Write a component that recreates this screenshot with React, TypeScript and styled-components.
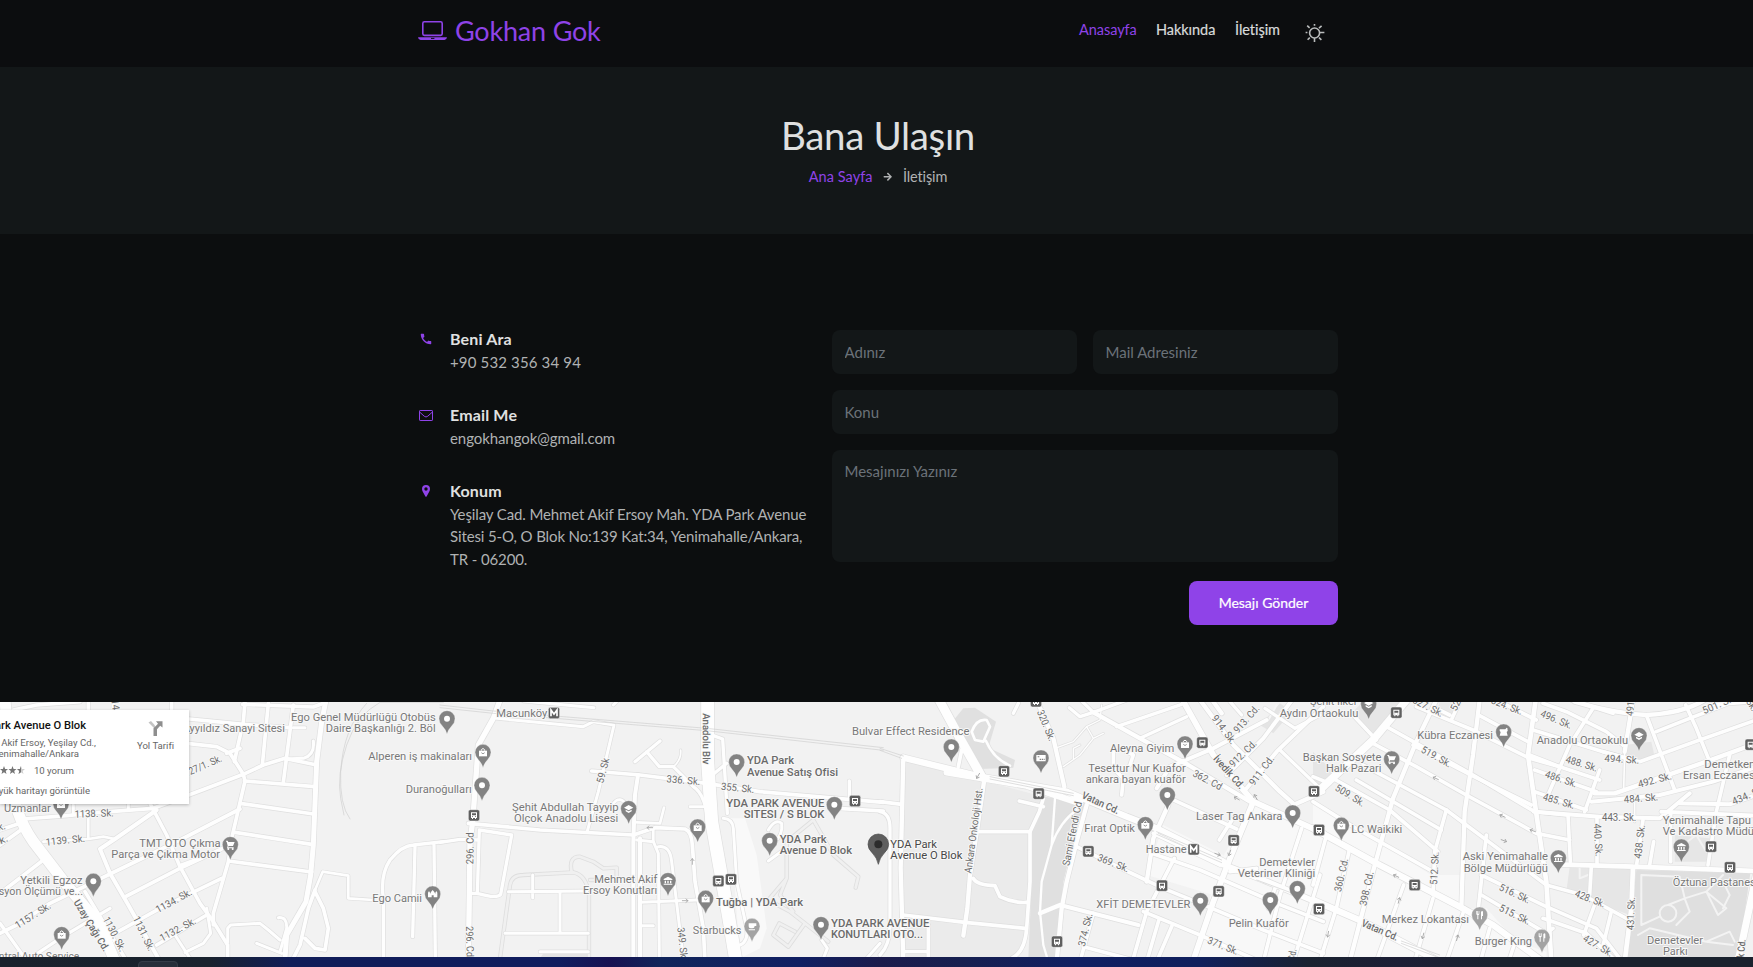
import React from "react";
import styled, { createGlobalStyle, css } from "styled-components";
import { FaArrowRight } from "react-icons/fa";
import { MdCall } from "react-icons/md";

const ACCENT = "#8f43e8";

const GlobalStyle = createGlobalStyle`
  * { box-sizing: border-box; }
  html, body { margin: 0; padding: 0; background: #0c0e0f; }
  body {
    font-family: Lato, "Liberation Sans", sans-serif;
    font-variant-ligatures: none;
    color: #b0b2b3;
    overflow: hidden;
  }
  a { color: inherit; text-decoration: none; }
`;

/* ---------- layout ---------- */

const Page = styled.div`
  display: flex;
  flex-direction: column;
  width: 100%;
  height: 967px;
  overflow: hidden;
`;

const Header = styled.header`
  display: flex;
  justify-content: space-between;
  height: 67px;
  padding: 0 428px 0 418px;
  background: #0c0d0f;
`;

const Brand = styled.a`
  display: flex;
  align-items: flex-start;
  gap: 8px;
  padding-top: 14px;
  font-size: 27px;
  line-height: 33px;
  letter-spacing: -0.2px;
  color: ${ACCENT};
`;

const LaptopSvg = styled.svg`
  width: 29px;
  height: 19px;
  margin-top: 7px;
`;

const Nav = styled.nav`
  display: flex;
  align-items: flex-start;
  padding-top: 19px;
`;

const NavLink = styled.a<{ $active?: boolean; $width: number }>`
  width: ${(p) => p.$width}px;
  font-size: 14.5px;
  line-height: 21px;
  letter-spacing: -0.05px;
  white-space: nowrap;
  color: ${(p) => (p.$active ? ACCENT : "#d8dadb")};
  -webkit-text-stroke: ${(p) => (p.$active ? 0 : 0.2)}px currentColor;
`;

const SunSvg = styled.svg`
  width: 20px;
  height: 20px;
  margin-top: 4px;
`;

const Hero = styled.section`
  display: flex;
  flex-direction: column;
  align-items: center;
  height: 167px;
  padding: 44px 0 0 3px;
  background: #131718;
`;

const Title = styled.h1`
  margin: 0;
  font-size: 38.5px;
  font-weight: 400;
  line-height: 48px;
  letter-spacing: -0.35px;
  color: #dfe0e0;
`;

const Crumbs = styled.div`
  display: flex;
  align-items: center;
  gap: 10.5px;
  margin-top: 7px;
  font-size: 14.5px;
  line-height: 22px;
`;

const CrumbLink = styled.a`
  letter-spacing: 0.05px;
  color: ${ACCENT};
`;

const CrumbHere = styled.span`
  letter-spacing: -0.15px;
`;

const Contact = styled.main`
  display: flex;
  justify-content: space-between;
  height: 468px;
  padding: 93px 415px 0 418px;
  background: #0c0e0f;
`;

const InfoList = styled.div`
  display: flex;
  flex-direction: column;
  gap: 30px;
`;

const InfoItem = styled.div`
  display: grid;
  grid-template-columns: 18px auto;
  column-gap: 14px;
`;

const InfoIcon = styled.span`
  display: flex;
  align-items: center;
  justify-content: center;
  height: 24px;
  padding-right: 2px;
  color: ${ACCENT};
`;

const InfoTitle = styled.h2`
  margin: 0;
  font-size: 16px;
  font-weight: 700;
  line-height: 23.5px;
  letter-spacing: 0.15px;
  color: #e0e1e1;
`;

const InfoText = styled.p<{ $spacing: number }>`
  margin: 0;
  font-size: 15px;
  line-height: 22.5px;
  letter-spacing: ${(p) => p.$spacing}px;
  white-space: nowrap;
`;

const Form = styled.form`
  display: grid;
  grid-template-columns: 245px 245px;
  grid-template-rows: 44px 44px 112px 44px;
  gap: 16px;
  margin-top: 3px;
`;

const fieldStyle = css`
  width: 100%;
  height: 100%;
  padding: 0 12.5px 1px;
  border: 0;
  border-radius: 8px;
  background: #131718;
  color: #dcdddd;
  font: 15px/22px Lato, "Liberation Sans", sans-serif;
  resize: none;
  outline: none;
  &::placeholder { color: #6b7279; opacity: 1; }
`;

const Field = styled.input<{ $wide?: boolean }>`
  ${fieldStyle}
  ${(p) => p.$wide && "grid-column: 1 / -1;"}
`;

const MessageField = styled.textarea`
  ${fieldStyle}
  grid-column: 1 / -1;
  padding-top: 10px;
`;

const SubmitButton = styled.button`
  grid-column: 1 / -1;
  justify-self: end;
  width: 149px;
  height: 44px;
  margin-top: 3px;
  padding: 0 0 2px;
  border: 0;
  border-radius: 8px;
  background: ${ACCENT};
  color: #fff;
  font: 14px Lato, "Liberation Sans", sans-serif;
  -webkit-text-stroke: 0.2px currentColor;
`;

const MapFrame = styled.section`
  position: relative;
  height: 255px;
  overflow: hidden;
  background: #f2f2f2;
`;

const MapSvg = styled.svg`
  display: block;
  width: 1753px;
  height: 255px;
  font-family: Roboto, sans-serif;
`;

const PlaceCard = styled.div`
  position: absolute;
  left: 0;
  top: 8px;
  display: flex;
  justify-content: space-between;
  width: 189px;
  height: 94px;
  overflow: hidden;
  background: #fff;
  box-shadow: 0 1px 3px rgba(0, 0, 0, 0.25);
  font-family: Roboto, sans-serif;
`;

const PlaceInfo = styled.div`
  padding-top: 8px;
`;

const PlaceLine = styled.div<{ $right: number; $title?: boolean; $gap?: number }>`
  display: flex;
  justify-content: flex-end;
  align-items: center;
  width: ${(p) => p.$right}px;
  margin-top: ${(p) => p.$gap ?? 0}px;
  font-size: ${(p) => (p.$title ? 11.2 : 9.6)}px;
  font-weight: ${(p) => (p.$title ? 500 : 400)};
  line-height: ${(p) => (p.$title ? 15 : 11)}px;
  white-space: nowrap;
  color: ${(p) => (p.$title ? "#111" : "#666")};
`;

const StarsSvg = styled.svg`
  width: 42px;
  height: 9px;
  margin-right: 9px;
  flex: none;
`;

const Directions = styled.a`
  display: flex;
  flex-direction: column;
  align-items: center;
  width: 67px;
  padding-top: 10px;
  font-size: 9.6px;
  line-height: 12px;
  color: #666;
`;

const DirectionsSvg = styled.svg`
  width: 15px;
  height: 16px;
  margin-bottom: 4px;
`;

const Taskbar = styled.footer`
  flex: none;
  display: flex;
  height: 10px;
  padding: 4px 0 0 138px;
  background: linear-gradient(90deg, #18212c 0, #19222e 210px, #101d58 290px, #101d5e 560px,
    #171252 610px, #11255a 660px, #101f62 800px, #1b1c4c 880px, #172050 960px, #101f62 1080px,
    #10205c 1200px, #1a2230 1310px, #1c1f36 1400px, #1a222e 1500px, #1a222e 100%);
`;

const TaskButton = styled.span`
  width: 40px;
  height: 10px;
  border: 1px solid #343c48;
  border-radius: 4px;
  background: #262e3a;
`;

/* ---------- map data: the area is split in four sheets drawn at three units per pixel ---------- */

type Sheet = 0 | 1 | 2 | 3;
const ORIGIN = [0, 440, 880, 1313];
const S = 3;
const TOP = 7;
const px = (s: Sheet, x: number) => ORIGIN[s] + x / S;
const py = (y: number) => y / S - TOP;

const AREAS: [Sheet, string, string][] = [
  [2, "#ebebeb", "M70 190L300 255L490 305L450 410L450 560L435 740L400 790H70Z"],
  [2, "#e0e0e0", "M205 95L250 40L285 38L348 80L325 158L405 195L400 218L300 222Z"],
  [2, "#e0e0e0", "M495 305L615 325L580 440L550 560L530 790H445L455 560V415Z"],
  [2, "#e4e4e4", "M1140 90L1200 25L1235 50L1180 115Z"],
  [2, "#f8f8f8", "M1010 520L1120 320L1320 410V790H950Z"],
  [2, "#f8f8f8", "M850 390L1030 480L1000 600L800 540Z"],
  [1, "#f9f9f9", "M870 370L915 370L950 480L980 700L960 760L900 790Z"],
  [3, "#f8f8f8", "M0 320L180 430L355 540L440 540L440 640L520 640L610 740L700 770L700 790H0Z"],
  [3, "#e6e6e6", "M110 60L150 20L270 20L180 125Z"],
  [3, "#e6e6e6", "M0 170L70 240L20 280L0 270Z"],
  [3, "#e6e6e6", "M935 150L1015 140L1025 185L940 205Z"],
  [3, "#e6e6e6", "M770 515L955 520L950 660L895 640L840 610L760 590Z"],
  [3, "#dfdfdf", "M970 525L1312 535L1275 790H940Z"],
  [3, "#e6e6e6", "M1085 420L1190 430V500L1085 500Z"],
  [3, "#e8e8e8", "M380 22L430 22L410 70L370 50Z"],
  [1, "#e4e4e4", "M310 775H445V790H300Z"],
];

const ROADS: [Sheet, number, string][] = [
  [0, 12, "M40 45L110 30L240 20M515 20V45M340 20V45M265 20V45M0 60L40 50"],
  [0, 12, "M70 372L200 362L300 352L460 340L620 280L730 238L790 210L855 190L950 210"],
  [0, 10, "M855 192L910 190Q945 180 940 138M880 98H915M385 320V345M220 330V355"],
  [0, 12, "M0 405L60 385M0 450L70 400M0 595L130 495"],
  [0, 9, "M265 370V430M130 440L265 432L310 425L345 432"],
  [0, 13, "M470 345L345 432L300 462L330 535L385 630L475 790"],
  [0, 12, "M255 590L375 790M0 715L50 690L150 625L330 537L540 435L720 342"],
  [0, 12, "M380 603L540 520L690 450M350 712L480 640L665 550M470 750L620 660M545 510L600 490"],
  [0, 12, "M450 325L500 420L540 515L600 625L640 680L683 750V790"],
  [0, 10, "M620 640L632 715L610 745L555 772M525 720L570 790"],
  [0, 12, "M735 20L730 80L703 200M805 25L787 210M880 30L850 262"],
  [0, 12, "M568 72L730 88L870 98M560 145L650 155L690 175L730 238L735 258M720 160L680 175"],
  [0, 12, "M735 258L695 430L685 500L640 655V690M733 258L945 275M720 325L940 357M705 412L935 448M685 498L935 531M728 28L940 36L978 22"],
  [0, 12, "M945 585L925 640L900 750L880 790M945 590L970 640L985 700L975 765L945 760L915 730"],
  [0, 16, "M978 15L965 80L950 200L940 450L932 540L918 620L860 720L855 790"],
  [0, 9, "M945 585L968 530L1045 542V610L1120 615"],
  [0, 10, "M683 740V700L692 690L780 685L805 705L840 735M835 668Q862 665 860 700L840 770M770 745L845 775"],
  [0, 11, "M1150 790V610Q1140 540 1170 495Q1205 452 1240 450L1330 440M1245 455L1238 725M1302 450L1306 790"],
  [0, 11, "M90 790L180 730L330 640M0 685L75 790"],
  [0, 34, "M15 15L35 250Q38 350 100 440L200 570L300 690L345 800"],

  [1, 10, "M250 18L462 38M170 70L430 95L460 80L522 90L475 290L442 408M520 30L530 20"],
  [1, 9, "M590 382L660 385L672 338M520 325Q540 300 560 330M750 335H800M640 400V438"],
  [1, 11, "M118 405L215 420L182 598Q170 612 112 595L118 405M88 595H115M0 442L60 433L115 435"],
  [1, 10, "M205 590L440 588M278 540V608M360 590V710M195 715H445M300 770H445"],
  [1, 10, "M590 435L640 440L655 475L658 790M655 455Q690 450 695 500L730 790M600 622L770 615M600 692H640"],
  [1, 11, "M585 200L660 138M620 170L658 215H700L760 275Q800 300 805 400"],
  [1, 6, "M700 215Q725 195 722 165"],
  [1, 11, "M820 122L848 132L862 355M805 250L860 205M1228 258V305"],
  [1, 12, "M455 228L600 240L800 265L960 290L1330 322M1190 340L1330 348"],
  [1, 13, "M594 240L585 300L580 440V800M600 430V800"],
  [1, 12, "M85 385L300 405L580 420L645 398L735 402Q755 410 757 450L765 560L790 700L795 800"],
  [1, 17, "M180 15L160 70L115 150L98 380L90 440L88 600L85 800"],
  [1, 10, "M850 370Q878 372 880 400L890 560L920 700Q925 740 900 750"],
  [1, 40, "M803 10L803 200L815 380L840 520L865 660L888 800"],
  [1, 10, "M985 498L1030 465M985 405Q1005 370 1025 385Q1030 420 1000 445"],
  [1, 10, "M1150 790L1162 760L1145 735M1280 790L1320 745"],

  [2, 12, "M70 660L255 682L435 700M145 690V790M0 320L65 328M300 410H450M418 318L490 335"],
  [2, 11, "M0 350Q30 355 30 400V690Q30 750 0 780M70 770H145"],
  [2, 12, "M490 310L478 350L450 410V560L440 700Q435 770 395 790M280 550Q290 570 345 572L360 605Q400 625 440 622"],
  [2, 14, "M70 185L62 520L70 800M312 260L292 400L270 540L262 640L250 722"],
  [2, 9, "M275 110Q290 70 320 75L330 95L310 140L285 135ZM318 138Q340 190 390 212"],
  [2, 8, "M525 310L515 450L485 560L480 650L490 750L505 800M515 450Q540 380 590 345"],
  [2, 14, "M470 15L520 130L553 275M620 330L590 440L560 560L545 640L530 800M480 655L540 630L775 690"],
  [2, 12, "M590 455L740 528L850 580L960 625L1150 705L1330 775M640 655L600 800M610 755L760 795"],
  [2, 11, "M568 38L600 65L640 52L605 18M640 52L740 15M710 95L905 28M780 130L920 65M400 55L415 25"],
  [2, 5, "M525 160L580 140L620 95L660 75L665 30M550 215L600 180L640 130L670 115M620 95L640 130M580 190V160L600 150"],
  [2, 14, "M640 52L780 130L925 210L1110 320"],
  [2, 12, "M700 170V220L730 250L725 300M730 165L760 180L750 210"],
  [2, 14, "M960 15L1060 150L1200 290L1245 330M1240 330L1330 290M1000 20L1025 55"],
  [2, 13, "M1160 75L1000 160L870 215L830 280M1240 10L1150 130L1040 240M1330 35L1190 170L1100 280"],
  [2, 11, "M1200 165L1330 290M1155 40L1245 100L1320 60M1050 20L1085 60"],
  [2, 12, "M870 310L1070 402M1060 370L1040 400L1018 435M820 415L1020 510M883 490L800 650L757 800M815 475L960 525L1190 625L1330 680"],
  [2, 12, "M790 650L960 720L1140 800M838 670L800 800M877 690L830 800"],
  [2, 12, "M1265 400L1200 600L1150 800M1320 540L1240 800M1185 580L1165 640M1130 520L1050 530"],
  [2, 14, "M865 330L820 430L800 560"],
  [2, 18, "M905 10L1000 180L1120 320L1330 415M1120 320L1050 490L1000 620L935 810"],
  [2, 12, "M235 215L245 165"],
  [2, 28, "M175 10L240 130L305 245"],
  [2, 20, "M70 188L300 245L560 290L740 365L830 400L1030 500M200 232L440 272L600 325"],
  [2, 18, "M1020 505L1150 555L1330 630"],

  [3, 12, "M180 145L310 215L460 300L670 415L770 435M215 92L480 240L665 350L760 360"],
  [3, 12, "M310 35L480 105L650 190L740 215M500 62L645 140M300 150L470 238L655 330M130 255L385 405"],
  [3, 12, "M150 210L400 345L700 570L810 600L940 670M60 250L230 345L375 470M0 245L50 265M0 320L120 395L360 530"],
  [3, 12, "M505 540L700 635L850 700L920 790M505 600L700 715L720 700M400 345L365 470L360 600M520 420L495 650"],
  [3, 12, "M115 55L190 135M440 20L415 75M550 15L670 75M410 60L370 40"],
  [3, 12, "M660 105L870 170L960 195M650 180L740 215L860 255M665 225L850 290M665 290L820 345"],
  [3, 12, "M690 25L760 50L880 110L930 150M840 40L770 150L705 300M860 225L815 350M775 15L900 55"],
  [3, 14, "M785 20Q900 55 1000 60Q1110 55 1175 15M960 15L935 170M845 295L905 295L1050 245L1180 200L1330 145"],
  [3, 6, "M935 170L932 285M965 300V380"],
  [3, 12, "M1000 60L1085 285M1118 30L1150 100L1190 200M1030 110L1130 70L1260 20M870 170L980 200L1160 135L1330 75M1190 30L1320 20"],
  [3, 13, "M835 320L1040 300L1200 260L1330 215M662 350L860 365L1040 370L1130 295M1100 325L1250 328L1330 300M1045 350L1330 362"],
  [3, 12, "M1250 180L1210 350L1185 510M765 360L772 500M852 370V510M990 375L970 515M1022 440L1010 510M1073 350V500"],
  [3, 12, "M835 515L830 600M850 615L812 720M895 650L868 760M690 670L820 715L900 790"],
  [3, 15, "M730 508L960 515L1330 528M960 515L955 640L935 800"],
  [3, 14, "M370 15L310 140L240 310L180 530L110 800M500 15L480 180L455 350L445 640"],
  [3, 15, "M668 15L645 180L672 370L700 560L715 800"],
  [3, 12, "M38 430L0 570M110 460L70 640L20 800M272 570L190 800M360 610L305 800M455 640L400 800M530 700L505 790M610 730L590 790"],
  [3, 24, "M285 10L180 135L15 290"],
  [3, 20, "M0 400L200 510L440 635L540 690L690 800M0 615L150 680L380 800"],
  [3, 22, "M1330 540L1275 800"],
];

/* service roads and park paths, drawn in one pale tone */
const PATHS: [Sheet, string, string][] = [
  [1, "#dedede", "M180 790L210 570Q215 540 250 540L400 532Q440 540 447 600V790M395 530Q385 485 420 485L460 500L490 520L530 518V555H450"],
  [1, "#dedede", "M1040 440L1120 375L1180 480L1255 545L1247 578M1040 440V550L985 615L1050 650L1165 740M1095 685L1045 755L1000 720L1018 685L1065 710M1040 550L1020 600L1060 650"],
  [3, "#f3f3f3", "M985 690V540L1100 545L1115 610L1065 630M1115 610L1180 590L1240 640L1215 660L1180 590M1180 590L1230 540M1040 655A25 25 0 1 0 1090 655A25 25 0 1 0 1040 655M985 690L1040 665M975 720L1010 700L1180 740L1260 750M1090 690L1130 650L1115 610M1180 740L1250 710L1265 740"],
  [3, "#f3f3f3", "M800 520L800 550L825 540M1110 450L1150 420L1180 470M1230 560L1250 600L1230 640"],
  [2, "#f6f6f6", "M1165 75L1190 30M1180 90L1205 45"],
];

const RAILS: [Sheet, string][] = [
  [0, "M1330 22L1140 22Q1070 60 1040 150Q1010 240 1022 310L1032 360M1100 25Q1030 100 1022 230Q1018 330 1050 372"],
  [1, "M0 30L160 48L800 100L1330 158M0 38L160 55L800 107L1330 166"],
  [2, "M0 160L70 183M0 166L65 190M330 245L580 295M330 252L580 302M830 410L1025 495M830 418L1025 503M1130 555L1230 592"],
  [3, "M265 745L370 785M265 738L380 780"],
];

type Label = [Sheet, string, number, number, number, number, ("road" | "bold" | "main")?];

const LABELS: Label[] = [
  [0, "Ayyıldız Sanayi Sitesi", 548, 111, 855, 111],
  [0, "Ego Genel Müdürlüğü Otobüs", 873, 78, 1307, 78],
  [0, "Daire Başkanlığı 2. Böl", 977, 111, 1307, 111],
  [0, "Alperen iş makinaları", 1105, 196, 1416, 196],
  [0, "Duranoğulları", 1217, 294, 1415, 294],
  [0, "Uzmanlar", 12, 352, 152, 352],
  [0, "TMT OTO Çıkma", 418, 455, 662, 455],
  [0, "Parça ve Çıkma Motor", 334, 488, 660, 488],
  [0, "Yetkili Egzoz", 61, 566, 248, 566],
  [0, "Emisyon Ölçümü ve...", -58, 599, 249, 599],
  [0, "Ego Camii", 1117, 620, 1266, 620],
  [0, "Central Auto Service", -40, 796, 238, 796],
  [0, "127/1. Sk.", 558, 246, 668, 198, "road"],
  [0, "1138. Sk.", 224, 368, 341, 364, "road"],
  [0, "1139. Sk.", 138, 452, 256, 440, "road"],
  [0, "Sk.", -22, 410, 18, 402, "road"],
  [0, "Sk.", -16, 455, 26, 438, "road"],
  [0, "1157. Sk.", 53, 702, 155, 638, "road"],
  [0, "1134. Sk.", 474, 655, 578, 598, "road"],
  [0, "1132. Sk.", 486, 740, 590, 684, "road"],
  [0, "1130. Sk.", 308, 672, 360, 772, "road"],
  [0, "1131. Sk.", 398, 670, 446, 770, "road"],
  [0, "Uzay Çağı Cd.", 220, 622, 312, 772, "bold"],
  [0, "14", 334, 14, 338, 46, "road"],
  [1, "Macunköy", 169, 66, 322, 66],
  [1, "Anadolu Blv", 788, 55, 788.2, 208, "bold"],
  [1, "59. Sk", 490, 266, 508, 192, "road"],
  [1, "336. Sk.", 679, 262, 780, 270, "road"],
  [1, "355. Sk.", 842, 284, 942, 294, "road"],
  [1, "296. Cd", 100, 508, 101, 412, "road"],
  [1, "296. Cd", 78, 694, 80, 786, "road"],
  [1, "349. Sk.", 712, 698, 722, 796, "road"],
  [1, "YDA Park", 921, 208, 1062, 208, "bold"],
  [1, "Avenue Satış Ofisi", 921, 242, 1194, 242, "bold"],
  [1, "Şehit Abdullah Tayyip", 216, 347, 536, 347],
  [1, "Olçok Anadolu Lisesi", 222, 381, 535, 381],
  [1, "YDA PARK AVENUE", 859, 335, 1153, 335, "bold"],
  [1, "SITESI / S BLOK", 911, 369, 1153, 369, "bold"],
  [1, "YDA Park", 1019, 443, 1160, 443, "bold"],
  [1, "Avenue D Blok", 1019, 477, 1236, 477, "bold"],
  [1, "Mehmet Akif", 463, 563, 652, 563],
  [1, "Ersoy Konutları", 429, 597, 652, 597],
  [1, "Tuğba | YDA Park", 828, 633, 1089, 633, "bold"],
  [1, "Starbucks", 758, 717, 904, 717],
  [1, "YDA PARK AVENUE", 1173, 696, 1468, 696, "bold"],
  [1, "KONUTLARI OTO...", 1173, 729, 1449, 729, "bold"],
  [1, "Bulvar Effect Residence", 1236, 121, 1588, 121],
  [2, "YDA Park", 31, 458, 171, 458, "main"],
  [2, "Avenue O Blok", 31, 492, 247, 492, "main"],
  [2, "320. Sk.", 470, 50, 508, 140, "road"],
  [2, "Aleyna Giyim", 690, 170, 883, 170],
  [2, "Tesettur Nur Kuafor", 625, 231, 917, 231],
  [2, "ankara bayan kuaför", 617, 265, 917, 265],
  [2, "Laser Tag Ankara", 948, 376, 1207, 376],
  [2, "Fırat Optik", 613, 412, 765, 412],
  [2, "Hastane", 797, 474, 920, 474],
  [2, "Demetevler", 1138, 512, 1305, 512],
  [2, "Veteriner Kliniği", 1073, 546, 1306, 546],
  [2, "XFİT DEMETEVLER", 649, 640, 931, 640],
  [2, "Pelin Kuaför", 1046, 695, 1226, 695],
  [2, "Aydın Ortaokulu", 1199, 65, 1435, 65],
  [2, "Şehit İlker", 1290, 31, 1432, 31],
  [2, "Başkan Sosyete", 1268, 198, 1504, 198],
  [2, "Ankara Onkoloji Hst.", 274, 536, 308, 280, "road"],
  [2, "Sami Efendi Cd", 568, 514, 606, 322, "road"],
  [2, "Vatan Cd.", 603, 308, 712, 358, "bold"],
  [2, "İvedik Cd.", 998, 192, 1080, 284, "bold"],
  [2, "362. Cd", 936, 242, 1020, 286, "road"],
  [2, "369. Sk.", 650, 496, 742, 532, "road"],
  [2, "371. Sk.", 980, 744, 1070, 780, "road"],
  [2, "374. Sk.", 614, 756, 638, 658, "road"],
  [2, "914. Sk.", 994, 70, 1054, 150, "road"],
  [2, "913. Cd.", 1074, 116, 1140, 42, "road"],
  [2, "912. Cd.", 1060, 218, 1132, 148, "road"],
  [2, "911. Cd.", 1122, 274, 1184, 192, "road"],
  [2, "398. Cd.", 1236, 850, 1250, 764, "road"],
  [3, "Halk Pazari", 39, 231, 205, 231],
  [3, "Kübra Eczanesi", 313, 133, 540, 133],
  [3, "Anadolu Ortaokulu", 671, 146, 945, 146],
  [3, "Demetkent", 1174, 219, 1338, 219],
  [3, "Ersan Eczanesi", 1110, 253, 1333, 253],
  [3, "Yenimahalle Tapu", 1049, 388, 1314, 388],
  [3, "Ve Kadastro Müdürlüğü", 1049, 421, 1398, 421],
  [3, "Öztuna Pastanesi", 1079, 573, 1336, 573],
  [3, "Demetevler", 1002, 748, 1170, 748],
  [3, "Parkı", 1050, 781, 1124, 781],
  [3, "LC Waikiki", 115, 414, 268, 414],
  [3, "Aski Yenimahalle", 449, 496, 705, 496],
  [3, "Bölge Müdürlüğü", 452, 530, 705, 530],
  [3, "Merkez Lokantası", 206, 683, 468, 683],
  [3, "Burger King", 485, 751, 657, 751],
  [3, "527. Sk.", 296, 22, 384, 66, "road"],
  [3, "524. Sk.", 532, 24, 624, 60, "road"],
  [3, "52", 430, 50, 444, 20, "road"],
  [3, "519. Sk.", 322, 170, 408, 218, "road"],
  [3, "509. Sk.", 64, 284, 148, 336, "road"],
  [3, "496. Sk.", 680, 64, 772, 102, "road"],
  [3, "488. Sk.", 756, 202, 850, 230, "road"],
  [3, "486. Sk.", 694, 246, 788, 278, "road"],
  [3, "485. Sk.", 688, 314, 782, 342, "road"],
  [3, "494. Sk.", 874, 200, 978, 206, "road"],
  [3, "492. Sk.", 978, 278, 1078, 252, "road"],
  [3, "484. Sk.", 933, 324, 1036, 316, "road"],
  [3, "443. Sk.", 867, 378, 970, 378, "road"],
  [3, "491", 960, 64, 964, 20, "road"],
  [3, "501. Sk.", 1174, 58, 1270, 16, "road"],
  [3, "Sk.", 1298, 20, 1318, 50, "road"],
  [3, "434. Sk.", 1262, 330, 1358, 290, "road"],
  [3, "440. Sk.", 842, 386, 848, 484, "road"],
  [3, "438. Sk.", 984, 492, 996, 390, "road"],
  [3, "512. Sk.", 372, 570, 378, 470, "road"],
  [3, "360. Cd.", 84, 592, 106, 492, "road"],
  [3, "398. Cd.", 160, 634, 182, 532, "road"],
  [3, "516. Sk.", 556, 584, 646, 626, "road"],
  [3, "515. Sk.", 556, 646, 646, 690, "road"],
  [3, "428. Sk.", 784, 604, 872, 638, "road"],
  [3, "427. Sk.", 808, 736, 892, 786, "road"],
  [3, "431. Sk.", 962, 706, 966, 606, "road"],
  [3, "Vatan Cd.", 143, 692, 250, 738, "bold"],
  [3, "İvedik Cd.", 1288, 842, 1298, 734, "bold"],
];

type Glyph = "dot" | "bag" | "cart" | "school" | "bank" | "cup" | "food" | "mosque" | "jar" | "ticket";

const PINS: [Sheet, number, number, Glyph, string?][] = [
  [0, 183, 327, "bag"], [0, 691, 449, "cart"], [0, 280, 559, "dot"], [0, 185, 719, "bag"], [0, 1298, 597, "mosque"],
  [1, 21, 71, "dot"], [1, 129, 172, "bag"], [1, 126, 271, "dot"], [1, 566, 341, "school"], [1, 890, 201, "dot"],
  [1, 1183, 329, "dot"], [1, 989, 437, "dot"], [1, 773, 396, "bag"], [1, 684, 557, "bank"], [1, 797, 610, "bag"],
  [1, 936, 694, "cup", "#a3a3a3"], [1, 1143, 689, "dot"],
  [2, 214, 156, "dot"], [2, 483, 189, "ticket"], [2, 915, 147, "bag"], [2, 862, 300, "dot"], [2, 1238, 354, "dot"],
  [2, 796, 389, "bag"], [2, 1252, 581, "dot"], [2, 961, 617, "dot"], [2, 1171, 615, "dot"],
  [3, 167, 27, "school"], [3, 236, 192, "cart"], [3, 572, 111, "jar"], [3, 978, 122, "school"], [3, 85, 391, "bag"],
  [3, 736, 489, "bank"], [3, 1105, 456, "bank"], [3, 500, 660, "food", "#a3a3a3"], [3, 687, 727, "food", "#a3a3a3"],
];

const STOPS: [Sheet, number, number, "bus" | "metro"][] = [
  [1, 342, 54, "metro"], [1, 102, 361, "bus"], [1, 1245, 318, "bus"], [1, 835, 558, "bus"], [1, 873, 553, "bus"],
  [2, 468, 19, "bus"], [2, 372, 229, "bus"], [2, 476, 296, "bus"], [2, 967, 143, "bus"], [2, 1302, 289, "bus"],
  [2, 1061, 436, "bus"], [2, 941, 463, "metro"], [2, 625, 469, "bus"], [2, 846, 572, "bus"], [2, 1016, 589, "bus"],
  [2, 531, 740, "bus"], [2, 1317, 405, "bus"], [2, 1317, 642, "bus"],
  [3, 250, 53, "bus"], [3, 305, 570, "bus"], [3, 1194, 455, "bus"], [3, 1251, 517, "bus"], [3, 1313, 149, "bus"],
];

const ARROWS: [Sheet, number, number, number][] = [
  [1, 629, 398, 180], [1, 757, 499, -90], [1, 736, 617, 0], [2, 1070, 310, 210], [2, 1127, 306, -120], [2, 1013, 478, 20],
  [2, 1049, 474, 110], [2, 294, 243, 120], [3, 368, 250, 205], [3, 568, 363, 205], [3, 659, 407, 200], [3, 573, 437, 20],
  [3, 249, 543, 205], [3, 258, 616, -75], [3, 330, 723, 105], [3, 433, 728, -75], [3, 45, 718, 100],
];

/* ---------- map pieces ---------- */

const LABEL_STYLE = {
  poi: { size: 11.4, fill: "#787878", weight: 400 },
  road: { size: 10.2, fill: "#6c6c6c", weight: 400 },
  bold: { size: 11.2, fill: "#6a6a6a", weight: 500 },
  main: { size: 11.4, fill: "#484848", weight: 400 },
};

function MapLabel({ label }: { label: Label }) {
  const [s, text, x1, y1, x2, y2, kind] = label;
  const st = LABEL_STYLE[kind ?? "poi"];
  const tilted = y1 !== y2;
  const size = kind === "bold" && tilted ? 10.2 : st.size;
  const length = Math.hypot(x2 - x1, y2 - y1) / S;
  const angle = (Math.atan2(y2 - y1, x2 - x1) * 180) / Math.PI;
  return (
    <text
      transform={`translate(${px(s, x1)} ${py(y1)}) rotate(${angle})`}
      fontSize={size}
      fontWeight={st.weight}
      fill={st.fill}
      stroke="#f8f8f8"
      strokeWidth={2}
      strokeLinejoin="round"
      paintOrder="stroke"
      textLength={length}
      lengthAdjust="spacingAndGlyphs"
    >
      {text}
    </text>
  );
}

function PinGlyph({ kind }: { kind: Glyph }) {
  switch (kind) {
    case "dot":
      return <circle r={9} fill="#fff" />;
    case "bag":
      return (
        <g>
          <path d="M-12 -5H12V12H-12Z" fill="#fff" />
          <path d="M-5 -5V-8Q0 -15 5 -8V-5" fill="none" stroke="#fff" strokeWidth={3} />
          <path d="M-5 1Q0 8 5 1" fill="none" stroke="#838383" strokeWidth={2.5} />
        </g>
      );
    case "cart":
      return (
        <g fill="#fff">
          <path d="M-13 -12H-8L-6 -8H13L8 4H-5L-7 8H10V11H-10L-8 3L-11 -9H-13Z" />
          <circle cx={-6} cy={13} r={3} />
          <circle cx={7} cy={13} r={3} />
        </g>
      );
    case "school":
      return <path d="M-14 -3L0 -11L14 -3L0 5ZM-9 3L0 8L9 3V8L0 13L-9 8Z" fill="#fff" />;
    case "bank":
      return <path d="M-13 -5L0 -12L13 -5V-2H-13ZM-10 0H-6V8H-10ZM-2 0H2V8H-2ZM6 0H10V8H6ZM-13 9H13V12H-13Z" fill="#fff" />;
    case "cup":
      return <path d="M-10 -9H13V-1H8Q8 6 1 6H-4Q-10 6 -10 0ZM-10 9H9V12H-10Z" fill="#fff" />;
    case "food":
      return <path d="M-10 -12V-3Q-10 0 -7 0V13H-4V0Q-1 0 -1 -3V-12H-3V-4H-5V-12H-7V-4H-8V-12ZM4 13V-10Q9 -14 10 -10V3H7V13Z" fill="#fff" />;
    case "mosque":
      return <path d="M-14 10V-4L-11 -9L-8 -4V0Q-6 -6 0 -12Q6 -6 8 0V-4L11 -9L14 -4V10H3V4H-3V10Z" fill="#fff" />;
    case "jar":
      return <path d="M-12 -8H5L9 -13L12 -11L10 -8H12V-3L9 0L12 11H-12L-9 0L-12 -3Z" fill="#fff" />;
    case "ticket":
      return <path d="M-14 -9H14V10H-14ZM-10 -5V-2H-5V-5ZM-4 2V6H0V2ZM2 2V6H6V2ZM8 2V6H11V2Z" fill="#fff" fillRule="evenodd" />;
  }
}

function StreetMap() {
  const sheet = (s: Sheet) => `translate(${ORIGIN[s]} ${-TOP}) scale(${1 / S})`;
  return (
    <MapSvg viewBox="0 0 1753 255">
      {AREAS.map(([s, fill, d], i) => (
        <path key={i} d={d} fill={fill} transform={sheet(s)} />
      ))}
      <g fill="none" strokeLinecap="round" strokeLinejoin="round">
        {PATHS.map(([s, stroke, d], i) => (
          <path key={i} d={d} stroke={stroke} strokeWidth={s === 1 ? 13 : 6} transform={sheet(s)} />
        ))}
        {PATHS.filter(([s]) => s === 1).map(([s, , d], i) => (
          <path key={i} d={d} stroke="#f0f0f0" strokeWidth={8} transform={sheet(s)} />
        ))}
        {ROADS.map(([s, w, d], i) => (
          <path key={i} d={d} stroke="#dfdfdf" strokeWidth={w + 3} transform={sheet(s)} />
        ))}
        {ROADS.map(([s, w, d], i) => (
          <path key={i} d={d} stroke="#fefefe" strokeWidth={w - 1} transform={sheet(s)} />
        ))}
        {RAILS.map(([s, d], i) => (
          <path key={i} d={d} stroke="#cfcfcf" strokeWidth={2} transform={sheet(s)} />
        ))}
        {ARROWS.map(([s, x, y, a], i) => (
          <path
            key={i}
            d="M-9 0H8M2 -5L8 0L2 5"
            stroke="#a5a5a5"
            strokeWidth={2.5}
            transform={`${sheet(s)} translate(${x} ${y}) rotate(${a})`}
          />
        ))}
      </g>
      {LABELS.map((l, i) => (
        <MapLabel key={i} label={l} />
      ))}
      {STOPS.map(([s, x, y, kind], i) => (
        <g key={i} transform={`${sheet(s)} translate(${x} ${y})`}>
          <rect x={-17} y={-17} width={34} height={34} rx={6} fill="#5f5f5f" stroke="#fafafa" strokeWidth={1.5} />
          {kind === "bus" ? (
            <path
              d="M-9 -9H9V8H6V11H3V8H-3V11H-6V8H-9ZM-6 -6V0H6V-6ZM-6 3V5H-3V3ZM3 3V5H6V3Z"
              fill="#fff"
              fillRule="evenodd"
            />
          ) : (
            <path d="M-9 10V-9L0 3L9 -9V10" fill="none" stroke="#fff" strokeWidth={5} />
          )}
        </g>
      ))}
      {PINS.map(([s, x, y, kind, fill], i) => (
        <g key={i} transform={`${sheet(s)} translate(${x} ${y})`}>
          <path
            d="M0 46Q-4 32 -14 22Q-24 12 -24 0A24 24 0 1 1 24 0Q24 12 14 22Q4 32 0 46Z"
            fill={fill ?? "#838383"}
            stroke="#fafafa"
            strokeWidth={1}
          />
          <PinGlyph kind={kind} />
        </g>
      ))}
      <g transform={`${sheet(1)} translate(1315 448)`}>
        <path d="M0 60Q-4 40 -18 26Q-31 14 -31 0A31 31 0 1 1 31 0Q31 14 18 26Q4 40 0 60Z" fill="#5e5e5e" stroke="#4a4a4a" strokeWidth={2} />
        <circle r={12} fill="#2c2c2c" />
      </g>
    </MapSvg>
  );
}

/* ---------- icons ---------- */

const LaptopIcon = () => (
  <LaptopSvg viewBox="0 0 29 19" fill="none" stroke="currentColor">
    <rect x={4.8} y={0.8} width={19.4} height={13.6} rx={1.6} strokeWidth={1.6} />
    <path d="M0 16.3H29Q28.6 19 26.5 19H2.5Q0.4 19 0 16.3Z" fill="currentColor" stroke="none" />
    <path d="M13 17.4H16.4" stroke="#0c0d0f" strokeWidth={1} />
  </LaptopSvg>
);

const SunIcon = () => (
  <SunSvg viewBox="0 0 20 20" fill="none" stroke="#b9bbbc" strokeWidth={1.6}>
    <circle cx={9.6} cy={10} r={5} />
    <path d="M9.5 1V2.8M9.5 15V19M0.6 9.5H2.4M15 9.5H19.4M2.2 2.6L4.6 4.8M16.6 2.8L14 5.2M2.6 16.8L4.8 14.6M16.4 16.8L14 14.6" />
  </SunSvg>
);

const EnvelopeIcon = () => (
  <svg width={14} height={11} viewBox="0 0 14 11" fill="none" stroke="currentColor" strokeWidth={1}>
    <rect x={0.5} y={0.5} width={13} height={10} rx={0.6} />
    <path d="M0.8 2.2L5.2 6.2Q7 7.8 8.8 6.2L13.2 2.2" />
  </svg>
);

const MarkerIcon = () => (
  <svg width={8} height={12} viewBox="0 0 8 12" fill="currentColor">
    <path
      fillRule="evenodd"
      d="M4 0A4 4 0 0 1 8 4Q8 5.6 6.8 7.6L4.6 11.4Q4 12.2 3.4 11.4L1.2 7.6Q0 5.6 0 4A4 4 0 0 1 4 0ZM4 2.3A1.7 1.7 0 1 0 4 5.7A1.7 1.7 0 1 0 4 2.3Z"
    />
  </svg>
);

const Stars = () => {
  const star = "M4 0L5.1 3H8L5.7 4.9L6.5 8L4 6.2L1.5 8L2.3 4.9L0 3H2.9Z";
  return (
    <StarsSvg viewBox="0 0 42 9">
      {[0, 8.5, 17, 25.5].map((x) => (
        <path key={x} d={star} fill="#757575" transform={`translate(${x} 0)`} />
      ))}
      <path d={star} fill="#cfcfcf" transform="translate(34 0)" />
      <path d="M4 0V6.2L1.5 8L2.3 4.9L0 3H2.9Z" fill="#757575" transform="translate(34 0)" />
    </StarsSvg>
  );
};

const DirectionsIcon = () => (
  <DirectionsSvg viewBox="0 0 15 16">
    <path d="M0.5 2.5L3 1L7 5.5V9Z" fill="#c4c4c4" />
    <path d="M5.5 16V8.2L10 3.8L8 1.2H14.5V7.6L12.2 5.8L9 9.2V16Z" fill="#8e8e8e" />
  </DirectionsSvg>
);

export default function App() {
  return (
    <Page>
      <GlobalStyle />
      <Header>
        <Brand href="#">
          <LaptopIcon />
          Gokhan Gok
        </Brand>
        <Nav>
          <NavLink href="#" $active $width={77}>Anasayfa</NavLink>
          <NavLink href="#" $width={79}>Hakkında</NavLink>
          <NavLink href="#" $width={70}>İletişim</NavLink>
          <SunIcon />
        </Nav>
      </Header>

      <Hero>
        <Title>Bana Ulaşın</Title>
        <Crumbs>
          <CrumbLink href="#">Ana Sayfa</CrumbLink>
          <FaArrowRight size={9.5} />
          <CrumbHere>İletişim</CrumbHere>
        </Crumbs>
      </Hero>

      <Contact>
        <InfoList>
          <InfoItem>
            <InfoIcon><MdCall size={14} /></InfoIcon>
            <div>
              <InfoTitle>Beni Ara</InfoTitle>
              <InfoText $spacing={0.15}>+90 532 356 34 94</InfoText>
            </div>
          </InfoItem>
          <InfoItem>
            <InfoIcon><EnvelopeIcon /></InfoIcon>
            <div>
              <InfoTitle>Email Me</InfoTitle>
              <InfoText $spacing={-0.08}>engokhangok@gmail.com</InfoText>
            </div>
          </InfoItem>
          <InfoItem>
            <InfoIcon><MarkerIcon /></InfoIcon>
            <div>
              <InfoTitle>Konum</InfoTitle>
              <InfoText $spacing={-0.12}>
                Yeşilay Cad. Mehmet Akif Ersoy Mah. YDA Park Avenue
                <br />
                Sitesi 5-O, O Blok No:139 Kat:34, Yenimahalle/Ankara,
                <br />
                TR - 06200.
              </InfoText>
            </div>
          </InfoItem>
        </InfoList>

        <Form>
          <Field placeholder="Adınız" />
          <Field placeholder="Mail Adresiniz" />
          <Field placeholder="Konu" $wide />
          <MessageField placeholder="Mesajınızı Yazınız" />
          <SubmitButton type="button">Mesajı Gönder</SubmitButton>
        </Form>
      </Contact>

      <MapFrame>
        <StreetMap />
        <PlaceCard>
          <PlaceInfo>
            <PlaceLine $right={86} $title>YDA Park Avenue O Blok</PlaceLine>
            <PlaceLine $right={96} $gap={4}>Mehmet Akif Ersoy, Yeşilay Cd.,</PlaceLine>
            <PlaceLine $right={79}>Yenimahalle/Ankara</PlaceLine>
            <PlaceLine $right={74} $gap={6}>
              <Stars />
              10 yorum
            </PlaceLine>
            <PlaceLine $right={90} $gap={9}>Daha büyük haritayı görüntüle</PlaceLine>
          </PlaceInfo>
          <Directions href="#">
            <DirectionsIcon />
            Yol Tarifi
          </Directions>
        </PlaceCard>
      </MapFrame>
      <Taskbar>
        <TaskButton />
      </Taskbar>
    </Page>
  );
}
